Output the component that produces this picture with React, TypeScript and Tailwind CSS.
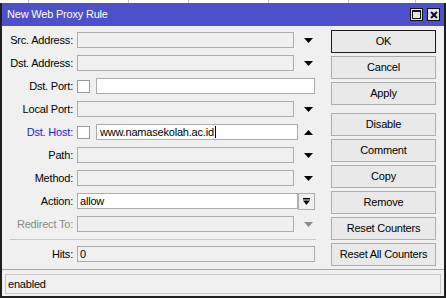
import React from 'react';

const Down = ({ gray = false }: { gray?: boolean }) => (
  <svg width="9" height="5" viewBox="0 0 9 5">
    <path d="M0 0h9L4.5 5z" fill={gray ? '#8c8c8c' : '#000'} />
  </svg>
);

const Up = () => (
  <svg width="9" height="5" viewBox="0 0 9 5">
    <path d="M0 5h9L4.5 0z" fill="#000" />
  </svg>
);

const Label = ({ text, tone = 'text-black' }: { text: string; tone?: string }) => (
  <div className={`w-[71px] shrink-0 text-right ${tone}`}>{text}</div>
);

const ComboRow = ({ label, tone, gray }: { label: string; tone?: string; gray?: boolean }) => (
  <div className="flex h-[16px] items-center gap-[4px]">
    <Label text={label} tone={tone} />
    <div className="h-[16px] w-[221px] border border-[#adadad] bg-[#f0f0f0]" />
    <div className="flex w-[18px] items-center pl-[6px]">
      <Down gray={gray} />
    </div>
  </div>
);

const buttons = ['OK', 'Cancel', 'Apply', 'Disable', 'Comment', 'Copy', 'Remove', 'Reset Counters', 'Reset All Counters'];

export default function App() {
  return (
    <div className="flex h-[298px] w-[446px] flex-col bg-white font-['Liberation_Sans',Arial,sans-serif] text-[11px] leading-none tracking-[-0.2px] text-black">
      {/* desktop behind the window */}
      <div className="flex h-[3px] shrink-0">
        <div className="ml-[28px] h-[3px] w-px bg-[#c4c4c4]" />
        <div className="ml-[99px] h-[3px] w-px bg-[#c4c4c4]" />
        <div className="ml-[59px] h-[3px] w-px bg-[#c4c4c4]" />
        <div className="ml-[79px] h-[3px] w-px bg-[#c4c4c4]" />
        <div className="ml-[79px] h-[3px] w-px bg-[#c4c4c4]" />
        <div className="ml-[66px] h-[3px] w-px bg-[#c4c4c4]" />
      </div>

      <div className="flex flex-1 flex-col border-x-2 border-b-2 border-[#1e1e1e]">
        {/* title bar */}
        <div className="flex h-[23px] shrink-0 items-center bg-[#4e50c9] pl-[5px] pr-[4px] text-white">
          <span className="flex-1">New Web Proxy Rule</span>
          <div className="flex gap-[4px]">
            <div className="flex h-[13px] w-[13px] items-center justify-center border border-[#111] bg-[#e4e4e4]">
              <svg width="9" height="9" viewBox="0 0 9 9">
                <rect x="0.5" y="0.5" width="8" height="8" fill="none" stroke="#111" />
                <rect x="0" y="0" width="9" height="2" fill="#111" />
              </svg>
            </div>
            <div className="flex h-[13px] w-[13px] items-center justify-center border border-[#111] bg-[#e4e4e4]">
              <svg width="8" height="8" viewBox="0 0 8 8">
                <path d="M1 1l6 6M7 1L1 7" stroke="#111" strokeWidth="2" />
              </svg>
            </div>
          </div>
        </div>

        {/* body */}
        <div className="flex h-[243px] shrink-0 bg-[#f0f0f0]">
          <div className="flex w-[314px] flex-col pt-[6px]">
            <div className="flex flex-col gap-[7px]">
              <ComboRow label="Src. Address:" />
              <ComboRow label="Dst. Address:" />
              <div className="flex h-[16px] items-center gap-[4px]">
                <Label text="Dst. Port:" />
                <div className="h-[13px] w-[13px] border border-[#9a9a9a] bg-white" />
                <div className="ml-[2px] h-[16px] w-[219px] border border-[#adadad] bg-white" />
              </div>
              <ComboRow label="Local Port:" />
              <div className="flex h-[16px] items-center gap-[4px]">
                <Label text="Dst. Host:" tone="text-[#1f1fdc]" />
                <div className="h-[13px] w-[13px] border border-[#9a9a9a] bg-white" />
                <div className="ml-[2px] flex h-[16px] w-[202px] items-center border border-[#adadad] bg-white pl-[3px]">
                  <span>www.namasekolah.ac.id</span>
                  <span className="ml-px h-[12px] w-px bg-black" />
                </div>
                <div className="-ml-[4px] flex w-[18px] items-center pl-[6px]">
                  <Up />
                </div>
              </div>
              <ComboRow label="Path:" />
              <ComboRow label="Method:" />
              <div className="flex h-[16px] items-center gap-[4px]">
                <Label text="Action:" />
                <div className="flex h-[16px] w-[221px] items-center border border-[#adadad] bg-white pl-[2px]">allow</div>
                <div className="-ml-[4px] flex h-[17px] w-[17px] items-center justify-center border border-[#adadad] bg-[#f0f0f0]">
                  <svg width="7" height="7" viewBox="0 0 7 7">
                    <rect x="0" y="0" width="7" height="1.5" fill="#000" />
                    <path d="M0 2.5h7L3.5 7z" fill="#000" />
                  </svg>
                </div>
              </div>
              <ComboRow label="Redirect To:" tone="text-[#8a8a8a]" gray />
            </div>
            <div className="ml-[8px] mt-[7px] h-px bg-[#c8c8c8]" />
            <div className="mt-[6px] flex h-[16px] items-center gap-[4px]">
              <Label text="Hits:" />
              <div className="flex h-[16px] w-[238px] items-center border border-[#adadad] bg-[#f0f0f0] pl-[2px]">0</div>
            </div>
          </div>

          <div className="ml-[15px] flex w-[105px] flex-col gap-[3px] pt-[4px]">
            {buttons.map((b) => (
              <div
                key={b}
                className={`flex h-[23px] items-center justify-center border bg-[#e9e9e9] ${
                  b === 'OK' ? 'border-[#1a1a1a]' : 'border-[#adadad]'
                } ${b === 'Disable' ? 'mt-[5px]' : ''}`}
              >
                {b}
              </div>
            ))}
          </div>
        </div>

        {/* status bar */}
        <div className="h-px shrink-0 bg-[#a8a8a8]" />
        <div className="flex-1 bg-[#f0f0f0] px-[3px] pt-[4px]">
          <div className="flex h-[20px] items-center border border-[#c8c8c8] pl-[2px]">enabled</div>
        </div>
      </div>
    </div>
  );
}
